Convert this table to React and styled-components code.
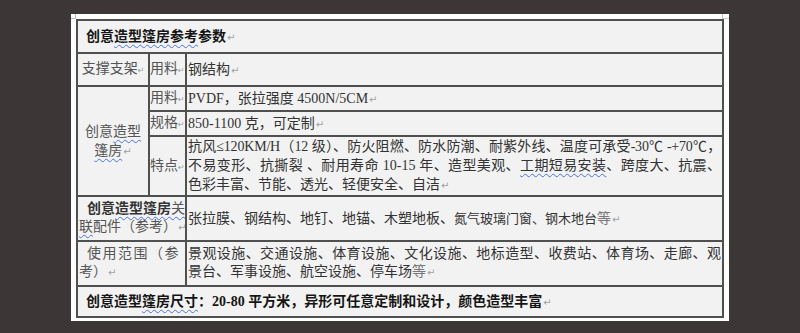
import React from "react";
import styled, { createGlobalStyle } from "styled-components";

const Global = createGlobalStyle`
  html, body { margin: 0; padding: 0; background: #3c3736; }
  body { width: 800px; height: 333px; overflow: hidden; }
  #root { display: block; }
`;

const Stage = styled.div`
  width: 800px;
  height: 333px;
  padding: 14px 0 0 71px;
  box-sizing: border-box;
`;

const Page = styled.div`
  position: relative;
  width: 658px;
  height: 307px;
  box-sizing: border-box;
  padding: 5px 7px 7px 5px;
  background: #ffffff;
  &::before {
    content: "";
    position: absolute;
    left: 0;
    top: 0;
    width: 4px;
    height: 4px;
    border-right: 1px solid #b8b8b8;
    border-bottom: 1px solid #b8b8b8;
  }
  &::after {
    content: "";
    position: absolute;
    right: 0;
    top: 0;
    width: 6px;
    height: 4px;
    border-left: 1px solid #c8c8c8;
    border-bottom: 1px solid #c8c8c8;
  }
`;

const Table = styled.table`
  width: 646px;
  table-layout: fixed;
  border-collapse: collapse;
  background: #f2f2f2;
  font-family: "Liberation Serif", "Noto Sans CJK SC", serif;
  font-size: 14px;
  color: #333;
`;

const Row = styled.tr`
  height: ${(p) => p.$h}px;
`;

const Cell = styled.td`
  border: 2px solid #505050;
  padding: 0 ${(p) => (p.$pad != null ? p.$pad : 1)}px;
  vertical-align: middle;
  text-align: ${(p) => p.$align || "left"};
  font-weight: ${(p) => (p.$bold ? 700 : 400)};
  color: ${(p) => (p.$bold ? "#151515" : p.$muted ? "#555" : "#333")};
  line-height: ${(p) => p.$lh || 19}px;
  white-space: nowrap;
  overflow: hidden;
  box-sizing: border-box;
`;

const Line = styled.div`
  white-space: nowrap;
  text-align: ${(p) => (p.$justify ? "justify" : "inherit")};
  text-align-last: ${(p) => (p.$justify ? "justify" : "auto")};
  padding-left: ${(p) => p.$indent || 0}px;
  letter-spacing: ${(p) => p.$ls || 0}px;
`;

const Spell = styled.span`
  text-decoration: underline wavy #4a72e0;
  text-decoration-thickness: 1px;
  text-underline-offset: 3px;
`;

const Light = styled.span`
  color: #777;
`;

const Sans = styled.span`
  font-family: "Noto Sans CJK SC", sans-serif;
  font-size: 13px;
`;

const Normal = styled.span`
  font-weight: 400;
  color: #555;
`;

const Mark = styled.span`
  font-family: "DejaVu Sans", sans-serif;
  font-weight: 400;
  font-size: ${(p) => (p.$small ? 8 : 10)}px;
  color: #a0a0a0;
  margin-left: ${(p) => (p.$small ? 0 : 1)}px;
  letter-spacing: 0;
`;

const Ret = ({ small }) => <Mark $small={small}>↵</Mark>;

export default function App() {
  return (
    <>
      <Global />
      <Stage>
        <Page>
          <Table>
            <colgroup>
              <col style={{ width: 72 }} />
              <col style={{ width: 37 }} />
              <col style={{ width: 537 }} />
            </colgroup>
            <tbody>
              <Row $h={33}>
                <Cell colSpan={3} $bold $pad={8}>
                  创意<Spell>造型篷房参考</Spell>参数
                  <Ret />
                </Cell>
              </Row>
              <Row $h={33}>
                <Cell $muted $align="center" $pad={0}>
                  支撑支架
                  <Ret small />
                </Cell>
                <Cell $muted $pad={0}>
                  用料
                  <Ret small />
                </Cell>
                <Cell>
                  钢结构
                  <Ret />
                </Cell>
              </Row>
              <Row $h={25}>
                <Cell rowSpan={3} $muted $align="center" $pad={0}>
                  <Line>
                    创意<Spell>造型</Spell>
                  </Line>
                  <Line>
                    <Spell>篷房</Spell>
                    <Ret />
                  </Line>
                </Cell>
                <Cell $muted $pad={0}>
                  用料
                  <Ret small />
                </Cell>
                <Cell>
                  PVDF，张拉强度 4500N/5CM
                  <Ret />
                </Cell>
              </Row>
              <Row $h={25}>
                <Cell $muted $pad={0}>
                  规格
                  <Ret small />
                </Cell>
                <Cell>
                  850-1100 克，可定制
                  <Ret />
                </Cell>
              </Row>
              <Row $h={58}>
                <Cell $muted $pad={0}>
                  特点
                  <Ret small />
                </Cell>
                <Cell $pad={1}>
                  <Line $justify $ls={-0.2}>
                    抗风≤120KM/H（12 级）、防火阻燃、防水防潮、耐紫外线、温度可承受-30℃ -+70℃，
                  </Line>
                  <Line $justify>
                    不易变形、抗撕裂 、耐用寿命 10-15 年、造型美观、<Spell>工期短易安装</Spell>、跨度大、抗震、
                  </Line>
                  <Line>
                    色彩丰富、节能、透光、轻便安全、自洁
                    <Ret />
                  </Line>
                </Cell>
              </Row>
              <Row $h={45}>
                <Cell colSpan={2} $pad={1} $lh={18}>
                  <Line $indent={8}>
                    <b>
                      创意<Spell>造型篷房</Spell>
                    </b>
                    <Normal>
                      <Spell>关</Spell>
                    </Normal>
                  </Line>
                  <Line>
                    <Normal>
                      <Spell>联</Spell>配件（参考）
                      <Ret />
                    </Normal>
                  </Line>
                </Cell>
                <Cell $pad={1}>
                  张拉膜、钢结构、地钉、地锚、木塑地板、<Sans>氮气玻璃门窗、钢木地台</Sans>
                  <Light>等</Light>
                  <Ret />
                </Cell>
              </Row>
              <Row $h={45}>
                <Cell colSpan={2} $muted $pad={1} $lh={18}>
                  <Line $indent={8} $ls={1.5}>
                    使用范围（参
                  </Line>
                  <Line>
                    考）
                    <Ret />
                  </Line>
                </Cell>
                <Cell $pad={1} $lh={18}>
                  <Line $justify>
                    景观设施、交通设施、体育设施、文化设施、地标造型、收费站、体育场、走廊、观
                  </Line>
                  <Line>
                    景台、军事设施、航空设施、停车场<Light>等</Light>
                    <Ret />
                  </Line>
                </Cell>
              </Row>
              <Row $h={31}>
                <Cell colSpan={3} $bold $pad={8}>
                  创意造型<Spell>篷房尺寸</Spell>：20-80 平方米，异形可任意定制和设计，颜色造型丰富
                  <Ret />
                </Cell>
              </Row>
            </tbody>
          </Table>
        </Page>
      </Stage>
    </>
  );
}
